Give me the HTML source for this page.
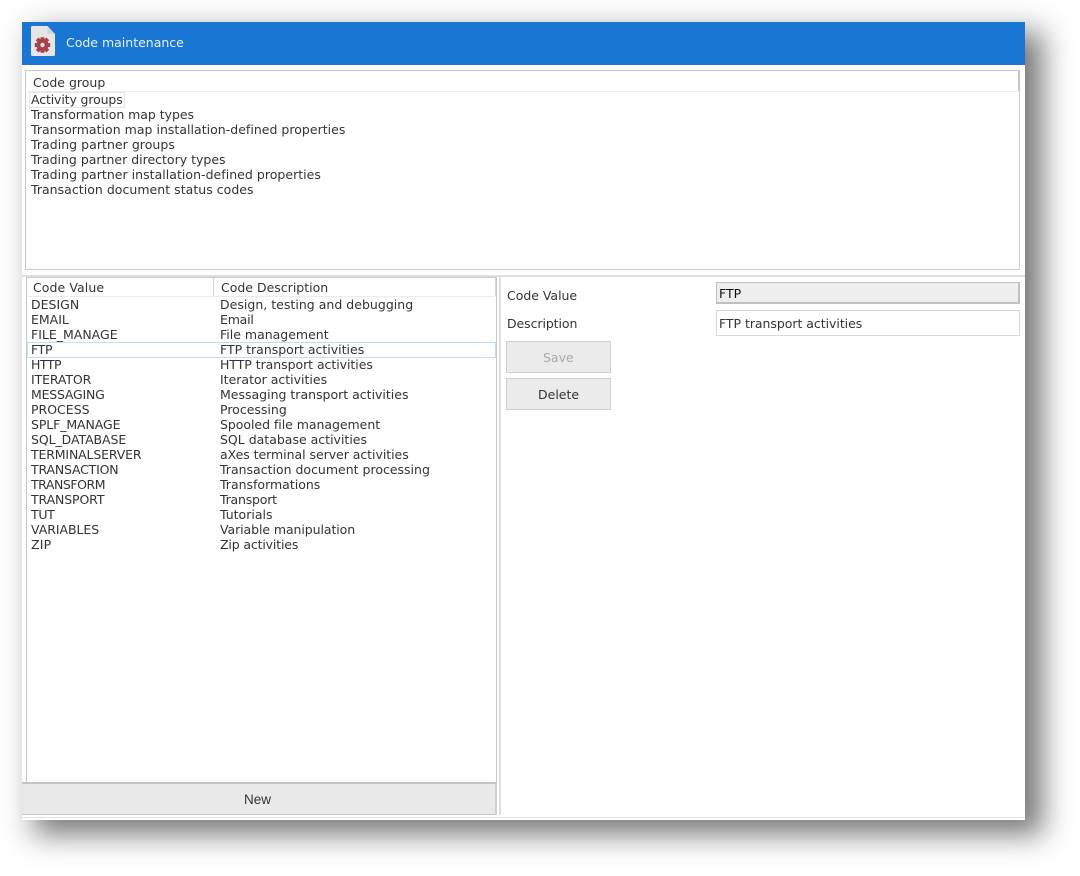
<!DOCTYPE html>
<html>
<head>
<meta charset="utf-8">
<style>
html,body{margin:0;padding:0;background:#fff;}
body{width:1080px;height:876px;position:relative;overflow:hidden;font-family:"DejaVu Sans","Liberation Sans",sans-serif;font-size:12.5px;color:#333;}
.a{position:absolute;}
.t{position:absolute;white-space:nowrap;line-height:15px;height:15px;}
#shadow{left:38px;top:36px;width:1002px;height:796px;background:#000;opacity:.44;filter:blur(13px);}
#shadow2{left:24px;top:22px;width:1026px;height:820px;background:#000;opacity:.14;filter:blur(16px);}
#win{left:22px;top:22px;width:1003px;height:798px;background:#fff;overflow:hidden;}
#c{position:absolute;left:0;top:0;width:1080px;height:876px;filter:blur(.25px);}
</style>
</head>
<body>
<div class="a" id="shadow2"></div>
<div class="a" id="shadow"></div>
<div class="a" id="win"></div>
<div id="c">
<div class="a" style="left:22px;top:22px;width:1003px;height:43px;background:#1976d2;"></div>
<svg class="a" style="left:30px;top:25px;" width="26" height="32" viewBox="0 0 26 32">
<path d="M2.500 1H17.500L25 9V29.500Q25 31 23.500 31H2.500Q1 31 1 29.500V2.500Q1 1 2.500 1Z" fill="#e6e6e6"/>
<path d="M17.500 1L25 9H17.500Z" fill="#cfd6dc"/>
<g fill="#a8424a"><circle cx="12.500" cy="20" r="6"/><path d="M10.500 12.300h4v3.500h-4zM10.500 24.200h4v3.500h-4zM4.800 18h3.500v4H4.800zM16.700 18h3.500v4h-3.500z"/><path d="M5.800 15.300l2.800-2.800 2.500 2.500-2.800 2.800zM16.400 12.500l2.800 2.800-2.500 2.500-2.800-2.800zM5.800 24.700l2.800 2.800 2.500-2.500-2.800-2.800zM19.200 24.700l-2.800 2.800-2.500-2.500 2.800-2.800z"/></g>
<circle cx="12.500" cy="20" r="2.200" fill="#e6e6e6"/>
</svg>
<div class="t" style="left:66px;top:35px;color:#e8f1fb;">Code maintenance</div>

<!-- code group panel -->
<div class="a" style="left:25px;top:70px;width:993px;height:198px;border:1px solid #c8c8c8;border-right:1px solid #d0d0d0;"></div>
<div class="a" style="left:26px;top:91px;width:992px;height:1px;background:#ececec;"></div>
<div class="a" style="left:1018px;top:71px;width:2px;height:20px;background:#c4c4c4;"></div>
<div class="t" style="left:33px;top:75px;">Code group</div>
<div class="a" style="left:29px;top:92px;width:94px;height:14px;border:1px solid #e6e6e6;"></div>
<div class="t" style="left:31px;top:92px;letter-spacing:-.13px;">Activity groups</div>
<div class="t" style="left:31px;top:107px;letter-spacing:-.04px;">Transformation map types</div>
<div class="t" style="left:31px;top:122px;letter-spacing:.02px;">Transormation map installation-defined properties</div>
<div class="t" style="left:31px;top:137px;letter-spacing:.04px;">Trading partner groups</div>
<div class="t" style="left:31px;top:152px;">Trading partner directory types</div>
<div class="t" style="left:31px;top:167px;letter-spacing:.03px;">Trading partner installation-defined properties</div>
<div class="t" style="left:31px;top:182px;letter-spacing:.03px;">Transaction document status codes</div>

<!-- splitter -->
<div class="a" style="left:22px;top:275px;width:1003px;height:2px;background:#dedede;"></div>

<!-- table -->
<div class="a" style="left:26px;top:277px;width:469px;height:505px;border:1px solid #c8c8c8;border-width:1px 1px 0 1px;"></div>
<div class="a" style="left:27px;top:296px;width:468px;height:1px;background:#ececec;"></div>
<div class="a" style="left:213px;top:278px;width:1px;height:18px;background:#d4d4d4;"></div>
<div class="a" style="left:495px;top:278px;width:1px;height:18px;background:#d4d4d4;"></div>
<div class="t" style="left:33px;top:280px;letter-spacing:.08px;">Code Value</div>
<div class="t" style="left:221px;top:280px;">Code Description</div>
<div class="a" style="left:27px;top:342px;width:467px;height:14px;border:1px solid #bfdff5;"></div>

<div class="t" style="left:31px;top:297px;">DESIGN</div><div class="t" style="left:220px;top:297px;letter-spacing:.02px;">Design, testing and debugging</div>
<div class="t" style="left:31px;top:312px;">EMAIL</div><div class="t" style="left:220px;top:312px;letter-spacing:-.2px;">Email</div>
<div class="t" style="left:31px;top:327px;">FILE_MANAGE</div><div class="t" style="left:220px;top:327px;">File management</div>
<div class="t" style="left:31px;top:342px;letter-spacing:-.3px;">FTP</div><div class="t" style="left:220px;top:342px;">FTP transport activities</div>
<div class="t" style="left:31px;top:357px;letter-spacing:-.5px;">HTTP</div><div class="t" style="left:220px;top:357px;letter-spacing:-.05px;">HTTP transport activities</div>
<div class="t" style="left:31px;top:372px;letter-spacing:-.12px;">ITERATOR</div><div class="t" style="left:220px;top:372px;">Iterator activities</div>
<div class="t" style="left:31px;top:387px;letter-spacing:-.22px;">MESSAGING</div><div class="t" style="left:220px;top:387px;">Messaging transport activities</div>
<div class="t" style="left:31px;top:402px;">PROCESS</div><div class="t" style="left:220px;top:402px;">Processing</div>
<div class="t" style="left:31px;top:417px;letter-spacing:-.1px;">SPLF_MANAGE</div><div class="t" style="left:220px;top:417px;letter-spacing:-.04px;">Spooled file management</div>
<div class="t" style="left:31px;top:432px;letter-spacing:-.08px;">SQL_DATABASE</div><div class="t" style="left:220px;top:432px;">SQL database activities</div>
<div class="t" style="left:31px;top:447px;letter-spacing:-.15px;">TERMINALSERVER</div><div class="t" style="left:220px;top:447px;letter-spacing:-.04px;">aXes terminal server activities</div>
<div class="t" style="left:31px;top:462px;letter-spacing:-.18px;">TRANSACTION</div><div class="t" style="left:220px;top:462px;">Transaction document processing</div>
<div class="t" style="left:31px;top:477px;letter-spacing:-.45px;">TRANSFORM</div><div class="t" style="left:220px;top:477px;">Transformations</div>
<div class="t" style="left:31px;top:492px;letter-spacing:-.12px;">TRANSPORT</div><div class="t" style="left:220px;top:492px;letter-spacing:-.2px;">Transport</div>
<div class="t" style="left:31px;top:507px;letter-spacing:-.3px;">TUT</div><div class="t" style="left:220px;top:507px;">Tutorials</div>
<div class="t" style="left:31px;top:522px;letter-spacing:-.05px;">VARIABLES</div><div class="t" style="left:220px;top:522px;letter-spacing:-.08px;">Variable manipulation</div>
<div class="t" style="left:31px;top:537px;letter-spacing:.2px;">ZIP</div><div class="t" style="left:220px;top:537px;letter-spacing:-.15px;">Zip activities</div>

<!-- New button -->
<div class="a" style="left:22px;top:782px;background:#e9e9e9;border-top:2px solid #c4c4c4;border-right:2px solid #d0d0d0;border-bottom:1px solid #c8c8c8;box-sizing:border-box;height:33px;width:475px;"></div>
<div class="t" style="left:244px;top:792px;font-family:'Liberation Sans',sans-serif;font-size:13.5px;">New</div>
<div class="a" style="left:22px;top:817px;width:1003px;height:1px;background:#e0e0e0;"></div>

<!-- divider -->
<div class="a" style="left:499px;top:277px;width:2px;height:538px;background:#dedede;"></div>

<!-- form -->
<div class="t" style="left:507px;top:288px;letter-spacing:-.02px;">Code Value</div>
<div class="t" style="left:507px;top:316px;letter-spacing:-.08px;">Description</div>
<div class="a" style="left:716px;top:282px;width:301px;height:19px;background:#eee;border:1px solid #c0c0c0;border-width:1px 2px 2px 1px;"></div>
<div class="t" style="left:719px;top:286px;color:#111;">FTP</div>
<div class="a" style="left:716px;top:310px;width:302px;height:24px;background:#fff;border:1px solid #d8d8d8;"></div>
<div class="t" style="left:719px;top:316px;letter-spacing:-.04px;">FTP transport activities</div>
<div class="a" style="left:506px;top:341px;width:103px;height:30px;background:#ebebeb;border:1px solid #d0d0d0;"></div>
<div class="t" style="left:543px;top:350px;color:#aaa;">Save</div>
<div class="a" style="left:506px;top:378px;width:103px;height:30px;background:#ebebeb;border:1px solid #d0d0d0;"></div>
<div class="t" style="left:538px;top:387px;">Delete</div>
</div>
</body>
</html>
